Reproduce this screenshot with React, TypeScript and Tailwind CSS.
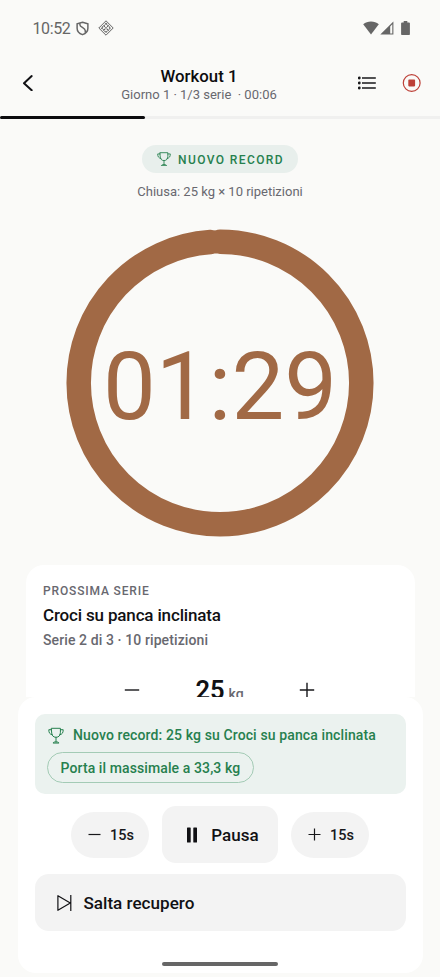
import React from 'react';

const TrophyIcon = ({ className }: { className: string }) => (
    <svg viewBox="0 0 16 16" className={className} fill="none" stroke="currentColor" strokeWidth="1" strokeLinejoin="round" strokeLinecap="round">
        <path d="M3.6.8h8.8v4.100c0 2.900-1.500 4.900-4.400 4.900S3.600 7.800 3.600 4.900z" />
        <path d="M3.600 2.200H.8c0 2.900.8 4.700 3.600 5.200M12.400 2.200h2.800c0 2.900-.8 4.700-3.600 5.200" />
        <path d="M8 9.800v4.700M5.200 15.200c.3-.6 1-.8 2.800-.8s2.500.2 2.800.8z" />
    </svg>
);

const StatusBar = () => (
    <div className="h-14 shrink-0 flex items-center pl-[32.500px] pr-[30px] text-[#666]">
        <span className="pt-px text-[16px] leading-5 tracking-[-0.4px]">10:52</span>
        <svg viewBox="0 0 14 16" className="w-[13px] h-[15px] ml-[6px]" fill="none" stroke="currentColor" strokeWidth="1.6">
            <path d="M7 1.200L12.800 3v4.600c0 3.300-2.600 5.800-5.800 7-3.200-1.200-5.800-3.700-5.800-7V3z" />
            <path d="M4.200 2.300v1.600c0 2.700 5.800 3.200 5.800 6.500v2.300" />
        </svg>
        <svg viewBox="0 0 16 16" className="w-4 h-4 ml-[8.500px]" fill="none" stroke="currentColor" strokeWidth="1">
            <path d="M8 .8L15.200 8 8 15.200.8 8z" strokeLinejoin="round" />
            <path d="M8 3.500L12.500 8 8 12.500 3.500 8zM5.800 5.800l4.400 4.400M10.200 5.800l-4.400 4.400" strokeWidth="1.300" strokeDasharray="1.500 0.700" />
        </svg>
        <svg viewBox="0 0 16 14" className="w-4 h-[14px] ml-auto" fill="currentColor">
            <path d="M8 13.600L.2 3.300C2.400 1.500 5 .6 8 .6s5.600.9 7.800 2.700z" />
        </svg>
        <svg viewBox="0 0 14 14" className="w-[14px] h-[14px] ml-[1px]" fill="currentColor">
            <path d="M13.400.4V13.500H.3zM12.300 3.200L10.200 5.400v7h2.100z" fillRule="evenodd" />
        </svg>
        <svg viewBox="0 0 9 14" className="w-[9px] h-[14px] ml-[7px]" fill="currentColor">
            <path d="M2.700 0h3.600v1.400H8c.5 0 .9.400.9.900v10.600c0 .6-.4 1-.9 1H1c-.5 0-.9-.4-.9-1V2.300c0-.5.4-.9.9-.9h1.700z" />
        </svg>
    </div>
);

const Header = () => (
    <header className="h-[60px] shrink-0 flex items-start justify-between pl-5 pr-[18px]">
        <button className="mt-[19px] w-4 h-4">
            <svg viewBox="0 0 16 16" className="w-4 h-4" fill="none" stroke="#111114" strokeWidth="2" strokeLinecap="round" strokeLinejoin="round">
                <path d="M11.700 1.100L4 8.300l7.700 7" />
            </svg>
        </button>
        <div className="flex-1 pt-[10px] text-center ml-[4px]">
            <h1 className="text-[16.800px] leading-5 font-medium text-[#0c0c0e]">Workout 1</h1>
            <p className="text-[13px] leading-4 pt-px text-[#68686f] whitespace-pre">Giorno 1 · 1/3 serie  · 00:06</p>
        </div>
        <div className="flex items-center gap-[26px] mt-[17px]">
            <svg viewBox="0 0 18 14" className="w-[18px] h-[14px]" fill="#18181b">
                <circle cx="1.300" cy="2" r="1.400" />
                <circle cx="1.300" cy="7" r="1.400" />
                <circle cx="1.300" cy="12" r="1.400" />
                <path d="M4 1.300h13.800v1.400H4zM4 6.300h13.800v1.400H4zM4 11.300h13.800v1.400H4z" />
            </svg>
            <svg viewBox="0 0 20 20" className="w-5 h-5">
                <circle cx="9.700" cy="10" r="8.400" fill="none" stroke="#bd4038" strokeWidth="1.200" />
                <rect x="6.300" y="6.600" width="6.800" height="6.800" rx="0.800" fill="#bd4038" />
            </svg>
        </div>
    </header>
);

const TimerRing = () => {
    const radius = 141.3;
    const length = 2 * Math.PI * radius;
    const left = 89;
    const total = 90;

    return (
        <div className="relative w-[308px] h-[308px] mx-auto mt-[26.500px] shrink-0 flex items-center justify-center">
            <svg viewBox="0 0 308 308" className="absolute inset-0 w-full h-full -rotate-90">
                <circle cx="154" cy="154" r={radius} fill="none" stroke="#a16945" strokeWidth="24.500" strokeLinecap="round" strokeDasharray={`${length * left / total} ${length}`} />
            </svg>
            <span className="relative pt-[8px] text-[94px] leading-none text-[#a16945]">01:29</span>
        </div>
    );
};

const NextSet = () => (
    <section className="mx-[25.500px] mt-[28.500px] h-[200px] shrink-0 rounded-[18px] bg-white px-[17.500px] pt-[18px]">
        <p className="text-[12px] leading-4 font-medium tracking-[0.85px] text-[#68686f]">PROSSIMA SERIE</p>
        <h2 className="mt-[4px] text-[17px] leading-6 font-medium tracking-[-0.16px] text-[#111114]">Croci su panca inclinata</h2>
        <p className="mt-[3px] text-[14px] leading-5 font-medium tracking-[0.1px] text-[#68686f]">Serie 2 di 3 · 10 ripetizioni</p>
        <div className="mt-[23px] flex items-start justify-center">
            <svg viewBox="0 0 16 16" className="w-4 h-4 mt-[9px] -ml-px" stroke="#18181b" strokeWidth="1.400"><path d="M.8 8h14.400" /></svg>
            <p className="w-[159px] text-center leading-[34px] text-[#111114]">
                <span className="text-[25.500px] font-semibold">25</span>
                <span className="text-[14px] font-medium text-[#68686f] ml-1">kg</span>
            </p>
            <svg viewBox="0 0 16 16" className="w-4 h-4 mt-[9px]" stroke="#18181b" strokeWidth="1.400"><path d="M.8 8h14.400M8 .8v14.400" /></svg>
        </div>
    </section>
);

const StepButton = ({ plus }: { plus?: boolean }) => (
    <button className="w-[78px] h-[46px] rounded-full bg-[#f3f3f3] flex items-center justify-center gap-[9px] pl-[2px] text-[14.500px] font-medium text-[#18181b]">
        <svg viewBox="0 0 13 13" className="w-[13px] h-[13px]" stroke="currentColor" strokeWidth="1.200">
            <path d={plus ? 'M.5 6.500h12M6.500.5v12' : 'M.5 6.500h12'} />
        </svg>
        <span className="pt-[2px]">15s</span>
    </button>
);

const BottomSheet = () => (
    <section className="mx-[17.500px] h-[276px] shrink-0 rounded-[18px] bg-white px-[17px] pt-[17px]">
        <div className="h-[80px] rounded-[10px] bg-[#ebf2ef] text-[#26804e] px-[13px] pt-[11px]">
            <div className="flex items-center">
                <TrophyIcon className="w-4 h-[17px]" />
                <span className="ml-[9.500px] text-[14px] leading-5 font-medium tracking-[0.12px]">Nuovo record: 25 kg su Croci su panca inclinata</span>
            </div>
            <button className="mt-[7px] -ml-px h-[31px] px-[13px] pt-px rounded-full border border-[#a3cbb5] text-[14px] font-medium tracking-[0.1px]">Porta il massimale a 33,3 kg</button>
        </div>
        <div className="mt-[12px] flex items-center justify-center gap-[13px]">
            <StepButton />
            <button className="w-[116px] h-[57px] rounded-[14px] bg-[#f3f3f3] flex items-center justify-center gap-[14px] pl-[6px] text-[17px] font-medium text-[#111114]">
                <svg viewBox="0 0 10 16" className="w-[10px] h-4" fill="currentColor">
                    <rect x="0" y="0.500" width="3.700" height="15" rx="0.600" />
                    <rect x="6.300" y="0.500" width="3.700" height="15" rx="0.600" />
                </svg>
                <span className="pt-[2px]">Pausa</span>
            </button>
            <StepButton plus />
        </div>
        <button className="mt-[11px] w-full h-[57px] rounded-[14px] bg-[#f3f3f3] flex items-center pl-[21px] gap-[12px] text-[17.100px] font-medium text-[#111114]">
            <svg viewBox="0 0 16 18" className="w-4 h-[18px]" fill="none" stroke="currentColor" strokeWidth="1.200" strokeLinejoin="round">
                <path d="M1.900 1.700v14.600L14.300 9zM14.800 1v16" />
            </svg>
            <span className="pt-[3px]">Salta recupero</span>
        </button>
        <div className="mt-[31px] mx-auto w-[116px] h-[4px] rounded-full bg-[#666]" />
    </section>
);

const App = () => {
    return (
        <div className="w-full h-[977px] overflow-hidden flex flex-col bg-[#fafaf8] font-['Roboto',sans-serif]">
            <StatusBar />
            <Header />
            <div className="h-[3px] shrink-0 bg-[#f0f0ef]">
                <div className="w-[145px] h-full rounded-full bg-[#0c0c0e]" />
            </div>
            <main className="h-[578px] shrink-0 overflow-hidden flex flex-col">
                <div className="mx-auto mt-[26px] w-[156px] h-[28px] shrink-0 rounded-full bg-[#e8efec] flex items-center justify-center gap-[7px] pl-px text-[#26804e]">
                    <TrophyIcon className="w-[14px] h-[14px]" />
                    <span className="pt-px text-[12px] leading-4 font-medium tracking-[1.4px]">NUOVO RECORD</span>
                </div>
                <p className="mt-[9px] text-center text-[13px] leading-5 text-[#68686f]">Chiusa: 25 kg × 10 ripetizioni</p>
                <TimerRing />
                <NextSet />
            </main>
            <BottomSheet />
        </div>
    );
};

export default App;
